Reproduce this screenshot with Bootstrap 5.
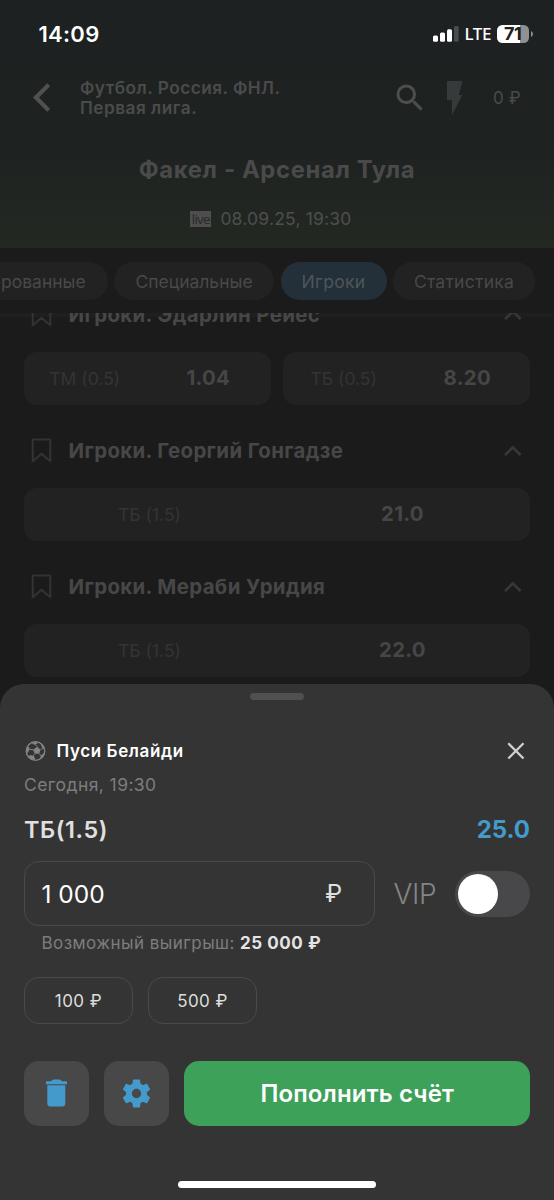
<!DOCTYPE html>
<html lang="ru">
<head>
<meta charset="utf-8">
<meta name="viewport" content="width=device-width, initial-scale=1">
<title>Факел - Арсенал Тула</title>
<link href="https://cdn.jsdelivr.net/npm/bootstrap@5.3.0/dist/css/bootstrap.min.css" rel="stylesheet">
<style>
  body { font-family: Inter, "Liberation Sans", sans-serif; background: #1b1b1b; color: #484848; }
  .screen { width: 554px; height: 1200px; }
  svg { display: block; flex: none; }
  .txt { font-size: 17.5px; line-height: 22px; white-space: nowrap; }

  .match-head { height: 248px; background: linear-gradient(#1d2121 0%, #1e2322 60%, #232822 100%); }
  .status { height: 68px; padding: 0 21px 0 38.5px; color: #fff; }
  .clock { font-size: 22px; font-weight: 600; letter-spacing: .3px; }
  .lte { font: 500 17px/20px "Noto Sans", sans-serif; letter-spacing: -.4px; margin: 0 6px 0 5px; }
  .battery { width: 32px; height: 18px; border-radius: 5.5px; background: linear-gradient(90deg, #fff 23px, #8f9190 23px); color: #1d2121; font-size: 18px; font-weight: 700; line-height: 18px; padding-left: 7px; letter-spacing: -.4px; }
  .nav-row { height: 60px; padding: 0 33px; }
  .back { margin-top: -2px; }
  .find { margin-right: 18.5px; }
  .league { font-size: 17.2px; font-weight: 600; line-height: 20.5px; letter-spacing: .5px; margin-left: 30px; color: #4b4b4b; }
  .balance { font-size: 17px; letter-spacing: .2px; color: #4a4a4a; margin-left: 30px; }
  .teams { font-size: 23.8px; font-weight: 700; line-height: 30px; letter-spacing: .65px; color: #4a4a4a; margin-top: 27px; }
  .when { margin-top: 23px; letter-spacing: .2px; color: #4d4f4e; padding-right: 12px; }
  .live { width: 21px; height: 16px; background: #4f4d4e; color: #252926; font: 400 13.5px/16px "Open Sans", sans-serif; letter-spacing: -.75px; margin-right: 9px; }

  .tabs { height: 65px; gap: 6.5px; padding-top: 14px; }
  .tab { height: 38px; line-height: 39px; border-radius: 19px; background: #222; text-align: center; color: #494949; flex: none; }
  .tab.on { background: #232f39; color: #4f555a; }
  .tab-cut { width: 107.5px; border-radius: 0 19px 19px 0; text-align: left; padding-left: 1px; }

  .markets { height: 371px; background: linear-gradient(#1f1f1f 4px, #1b1b1b 4px); }
  .market { padding: 0 24px; margin-bottom: 23px; }
  .market:first-child { margin-top: -21px; }
  .market-name { height: 46px; padding: 0 8px 0 7px; color: #474747; font-size: 20.4px; font-weight: 700; letter-spacing: .37px; }
  .market-name span { padding-left: 15.5px; }
  .odd { height: 53px; background: #222; border-radius: 13px; flex: 1; text-align: center; color: #343434; }
  .odds { gap: 12px; margin-top: 14px; }
  .odd > * { flex: 1; position: relative; left: -1px; }
  .odd b { font-size: 20.4px; font-weight: 700; letter-spacing: .3px; color: #464646; }

  .slip { height: 516px; background: #343434; border-radius: 24px 24px 0 0; padding: 9px 24px 0; }
  .grip { width: 54px; height: 7px; border-radius: 3.5px; background: #505050; }
  .slip-top { height: 24px; margin-top: 39px; }
  .close-x { margin-right: 5.5px; }
  .player { font-size: 17px; font-weight: 600; letter-spacing: .6px; color: #fff; margin-left: 9.5px; padding-top: 1px; }
  .gray { color: #7d7d7d; }
  .today { margin-top: 11px; letter-spacing: .42px; }
  .pick { height: 34px; margin-top: 16.5px; }
  .pick-name { font-size: 23.4px; font-weight: 600; letter-spacing: .6px; color: #e0e0e0; }
  .pick-odd { font-size: 24px; font-weight: 700; color: #439acb; letter-spacing: -.05px; }
  .stake-row { margin-top: 14px; }
  .stake { width: 351px; height: 65px; border: 1.5px solid #4a4a4a; border-radius: 15px; padding: 2px 32px 0 16.5px; color: #fff; font-size: 24.5px; }
  .stake .cur { font-size: 24px; color: #e0e0e0; }
  .vip { font-size: 28px; font-weight: 300; letter-spacing: -.35px; line-height: 34px; color: #858585; margin-left: 18.5px; padding-top: 1px; }
  .toggle { width: 75px; height: 46px; border-radius: 23px; background: #48484b; padding: 3px; margin-top: 1px; }
  .knob { width: 40px; height: 40px; border-radius: 50%; background: #fff; }
  .win { font-size: 17px; letter-spacing: .44px; line-height: 22px; padding-left: 17.5px; margin-top: 6px; }
  .win b { color: #e4e4e4; letter-spacing: .55px; font-weight: 700; }
  .quick { width: 109px; height: 47px; border: 1.5px solid #4a4a4a; border-radius: 15px; color: #ddd; font-size: 17px; line-height: 46px; letter-spacing: .45px; text-align: center; }
  .tool { width: 65px; height: 65px; border-radius: 15px; background: #484848; }
  .pay { height: 65px; border-radius: 15px; background: #3da159; color: #fff; font-size: 24px; font-weight: 600; letter-spacing: .12px; padding: 2px 0 0 1px; }
  .home { width: 198px; height: 7px; border-radius: 4px; background: #fff; margin-top: 55px; }
</style>
</head>
<body>
<svg class="d-none">
  <symbol id="bookmark" viewBox="0 0 22 26"><path d="M2.200 1.500h16.600q.5 0 .5.5V23.300L10.500 15.700 1.700 23.300V2q0-.5.5-.5z" fill="none" stroke="#333" stroke-width="2" stroke-linejoin="round"/></symbol>
  <symbol id="up" viewBox="0 0 18 12"><path d="M1 10.200 8.800 2.300l7.800 7.900" fill="none" stroke="#383838" stroke-width="2.600"/></symbol>
</svg>
<div class="screen overflow-hidden d-flex flex-column">
  <header class="match-head">
    <div class="status d-flex align-items-center">
      <span class="clock me-auto">14:09</span>
      <svg width="26" height="16" fill="#fff"><rect x="0" y="9.500" width="5" height="6.300" rx="1.500"/><rect x="7" y="6.500" width="5" height="9.300" rx="1.500"/><rect x="14" y="3.300" width="5" height="12.500" rx="1.500"/><rect x="21" y="0" width="4.700" height="15.800" rx="1.500" fill="#4a4d4d"/></svg>
      <span class="lte">LTE</span>
      <span class="battery">71</span>
      <svg width="4" height="6"><path d="M2 0Q4 1 4 3T2 6z" fill="#8f9190"/></svg>
    </div>
    <div class="nav-row d-flex align-items-center">
      <svg class="back" width="17" height="29" viewBox="0 0 17 29"><path d="M15.700 1.700 3 14.500l12.700 12.800" fill="none" stroke="#505050" stroke-width="4.200"/></svg>
      <div class="league me-auto">Футбол. Россия. ФНЛ.<br>Первая лига.</div>
      <svg class="find" width="36" height="36" viewBox="0 0 24 24" fill="#4d4d4d"><path d="M15.500 14h-.79l-.28-.27A6.470 6.470 0 0 0 16 9.500 6.500 6.500 0 1 0 9.500 16c1.610 0 3.090-.59 4.230-1.570l.27.28v.79l5 4.990L20.490 19zm-6 0C7.010 14 5 11.990 5 9.500S7.010 5 9.500 5 14 7.010 14 9.500 11.990 14 9.500 14z"/></svg>
      <svg width="16" height="35" viewBox="0 0 16 35"><path d="M0 0h15.500l-3.700 14h3.500L5 34V19.300H0z" fill="#373a3a"/></svg>
      <span class="balance txt">0 ₽</span>
    </div>
    <h1 class="teams text-center mb-0">Факел - Арсенал Тула</h1>
    <div class="when txt d-flex justify-content-center align-items-center"><span class="live text-center">live</span>08.09.25, 19:30</div>
  </header>

  <nav class="tabs d-flex overflow-hidden">
    <div class="tab txt tab-cut">рованные</div>
    <div class="tab txt" style="width:160px">Специальные</div>
    <div class="tab txt on" style="width:106px;letter-spacing:.3px">Игроки</div>
    <div class="tab txt" style="width:142px;letter-spacing:.25px">Статистика</div>
  </nav>

  <main class="markets overflow-hidden flex-shrink-0">
    <section class="market">
      <div class="market-name d-flex align-items-center"><svg width="22" height="26"><use href="#bookmark"/></svg><span class="me-auto">Игроки. Эдарлин Рейес</span><svg width="18" height="12"><use href="#up"/></svg></div>
      <div class="odds d-flex">
        <div class="odd d-flex align-items-center"><span class="txt">ТМ (0.5)</span><b>1.04</b></div>
        <div class="odd d-flex align-items-center"><span class="txt">ТБ (0.5)</span><b>8.20</b></div>
      </div>
    </section>
    <section class="market">
      <div class="market-name d-flex align-items-center"><svg width="22" height="26"><use href="#bookmark"/></svg><span class="me-auto">Игроки. Георгий Гонгадзе</span><svg width="18" height="12"><use href="#up"/></svg></div>
      <div class="odds d-flex"><div class="odd d-flex align-items-center"><span class="txt">ТБ (1.5)</span><b>21.0</b></div></div>
    </section>
    <section class="market">
      <div class="market-name d-flex align-items-center"><svg width="22" height="26"><use href="#bookmark"/></svg><span class="me-auto">Игроки. Мераби Уридия</span><svg width="18" height="12"><use href="#up"/></svg></div>
      <div class="odds d-flex"><div class="odd d-flex align-items-center"><span class="txt">ТБ (1.5)</span><b>22.0</b></div></div>
    </section>
  </main>

  <section class="slip flex-shrink-0">
    <div class="grip mx-auto"></div>
    <div class="slip-top d-flex align-items-center">
      <svg width="23" height="22" viewBox="-11.500 -11 23 22"><circle r="9.300" fill="none" stroke="#858585" stroke-width="1.300"/><g fill="#858585"><path d="M1.800-4.300 5-1.200 3.700 2.800-.7 2.800-2.500-1.200z"/><path d="M-4.500-8.500 1.500-9 2-7.500-1.500-6.300zM6-7 8.800-3.500 8.300-1.500 6-4.500zM9 1.500 7.500 5.500 4.500 7.500 5.500 4.500zM-5.500 4-1.500 5 0 8.800-4.500 8.500-7 6zM-9.300-2.500-6.500-4.500-6-1-8.500 2.500z"/></g><path d="M1.800-4.300-.5-6.800M5-1.200 7.500-3M3.700 2.800 6 5.200M-.7 2.800-2.500 4.800M-2.500-1.200-6.300-2" stroke="#858585"/></svg>
      <span class="player me-auto">Пуси Белайди</span>
      <svg class="close-x" width="18" height="18" viewBox="0 0 18 18"><path d="M1.300 1.300 16.500 16.500M16.500 1.300 1.300 16.500" stroke="#cfcfcf" stroke-width="2.300"/></svg>
    </div>
    <div class="txt gray today">Сегодня, 19:30</div>
    <div class="pick d-flex justify-content-between align-items-center">
      <span class="pick-name">ТБ(1.5)</span>
      <span class="pick-odd">25.0</span>
    </div>
    <div class="stake-row d-flex align-items-center">
      <div class="stake d-flex align-items-center justify-content-between">
        <span>1 000</span><span class="cur">₽</span>
      </div>
      <span class="vip me-auto">VIP</span>
      <div class="toggle"><div class="knob"></div></div>
    </div>
    <div class="win gray">Возможный выигрыш: <b>25 000 ₽</b></div>
    <div class="d-flex" style="gap:15px;margin-top:23px">
      <div class="quick">100 ₽</div>
      <div class="quick">500 ₽</div>
    </div>
    <div class="d-flex" style="margin-top:37px">
      <div class="tool d-flex align-items-center justify-content-center"><svg width="22" height="28" viewBox="0 0 22 28" fill="#439acb"><path d="M0 2.300h5Q6 .5 8 .5h5q2 0 3 1.800h5v3H0zM1.300 6.300h18v18q0 3.200-3 3.200h-12q-3 0-3-3.200z"/></svg></div>
      <div class="tool d-flex align-items-center justify-content-center" style="margin:0 15px 0 14.500px"><svg width="35" height="35" viewBox="0 0 24 24" fill="#439acb"><path d="M19.140 12.940c.04-.3.060-.61.060-.94 0-.32-.02-.64-.07-.94l2.030-1.580a.49.49 0 0 0 .12-.61l-1.920-3.320a.488.488 0 0 0-.59-.22l-2.390.96c-.5-.38-1.030-.7-1.620-.94l-.36-2.540a.484.484 0 0 0-.48-.41h-3.840c-.24 0-.43.17-.47.41l-.36 2.540c-.59.24-1.130.57-1.620.94l-2.390-.96c-.22-.08-.47 0-.59.22L2.740 8.870c-.12.21-.08.47.12.61l2.030 1.580c-.05.3-.09.63-.09.94s.02.64.07.94l-2.030 1.580a.49.49 0 0 0-.12.61l1.920 3.320c.12.22.37.29.59.22l2.390-.96c.5.38 1.030.7 1.620.94l.36 2.540c.05.24.24.41.48.41h3.840c.24 0 .44-.17.47-.41l.36-2.540c.59-.24 1.130-.56 1.620-.94l2.390.96c.22.08.47 0 .59-.22l1.920-3.320c.12-.22.07-.47-.12-.61zM12 15.200a3.200 3.200 0 1 1 0-6.400 3.200 3.200 0 0 1 0 6.400z"/></svg></div>
      <div class="pay flex-grow-1 d-flex align-items-center justify-content-center">Пополнить счёт</div>
    </div>
    <div class="home mx-auto"></div>
  </section>
</div>
<script src="https://cdn.jsdelivr.net/npm/bootstrap@5.3.0/dist/js/bootstrap.bundle.min.js"></script>
</body>
</html>
